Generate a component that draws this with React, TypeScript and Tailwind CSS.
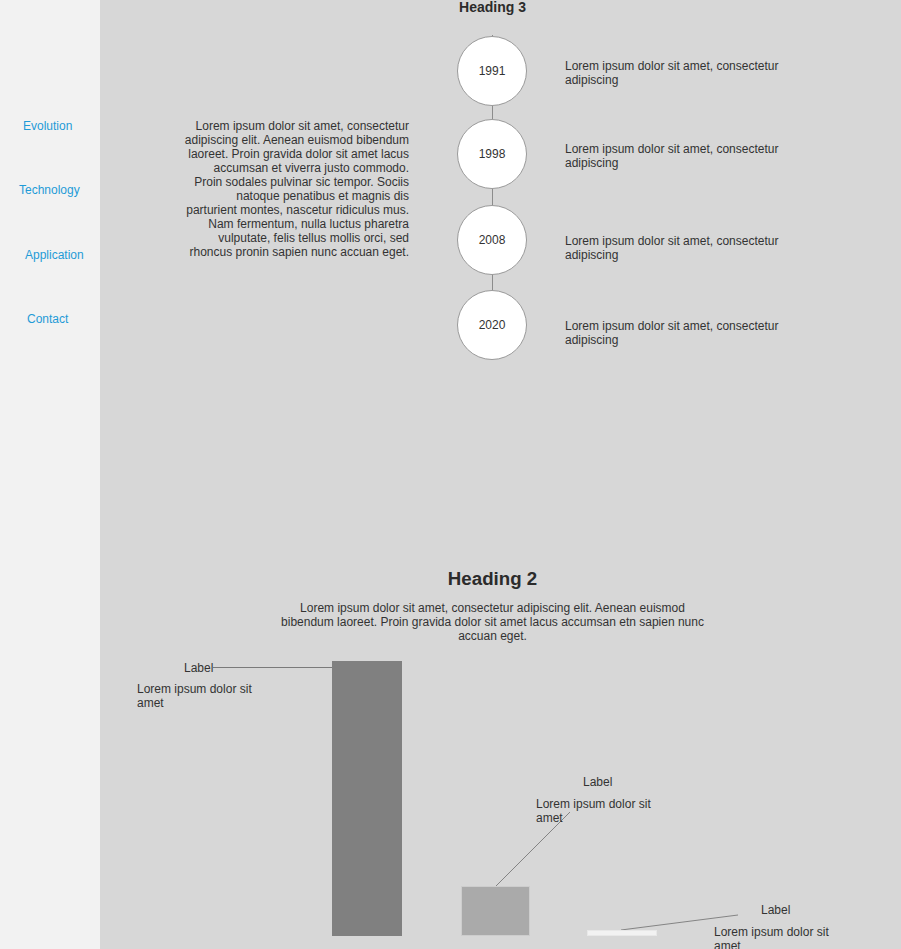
import React from 'react';

const navItems = [
  { label: 'Evolution', cls: 'pl-[23px] mt-[119px]' },
  { label: 'Technology', cls: 'pl-[19px] mt-[50px]' },
  { label: 'Application', cls: 'pl-[25px] mt-[51px]' },
  { label: 'Contact', cls: 'pl-[27px] mt-[50px]' },
];

const milestones = [
  { year: '1991', gap: 'h-px', pad: 'pt-[4px]' },
  { year: '1998', gap: 'h-[13px]', pad: 'pt-[4px]' },
  { year: '2008', gap: 'h-[16px]', pad: 'pt-[16px]' },
  { year: '2020', gap: 'h-[15px]', pad: 'pt-[16px]' },
];

const blurb = 'Lorem ipsum dolor sit amet, consectetur adipiscing';
const intro =
  'Lorem ipsum dolor sit amet, consectetur adipiscing elit. Aenean euismod bibendum laoreet. Proin gravida dolor sit amet lacus accumsan et viverra justo commodo. Proin sodales pulvinar sic tempor. Sociis natoque penatibus et magnis dis parturient montes, nascetur ridiculus mus. Nam fermentum, nulla luctus pharetra vulputate, felis tellus mollis orci, sed rhoncus pronin sapien nunc accuan eget.';

function Sidebar() {
  return (
    <nav className="w-[100px] shrink-0 bg-[#f2f2f2] flex flex-col">
      {navItems.map((item) => (
        <a key={item.label} href="#" className={`${item.cls} text-[12px] leading-[14px] text-[#1f9bd7]`}>
          {item.label}
        </a>
      ))}
    </nav>
  );
}

function Timeline() {
  return (
    <section className="flex mt-[20px]">
      <p className="ml-[83px] mt-[84px] w-[226px] text-right text-[12px] leading-[14px] text-[#333]">{intro}</p>
      <div className="ml-[48px] flex flex-col">
        {milestones.map((m) => (
          <div key={m.year} className="flex flex-col">
            <div className="w-[70px] flex justify-center">
              <div className={`w-px ${m.gap} bg-[#8c8c8c]`} />
            </div>
            <div className="flex items-center">
              <div className="w-[70px] h-[70px] rounded-full bg-white border border-[#9a9a9a] flex items-center justify-center text-[12px] text-[#333]">
                {m.year}
              </div>
              <p className={`ml-[38px] ${m.pad} w-[230px] text-[12px] leading-[14px] text-[#333]`}>{blurb}</p>
            </div>
          </div>
        ))}
      </div>
    </section>
  );
}

function Chart() {
  return (
    <div className="relative h-[299px] text-[12px] leading-[14px] text-[#333]">
      <svg className="absolute inset-0" width="801" height="299">
        <line x1="113" y1="17.5" x2="232" y2="17.5" stroke="#7a7a7a" strokeWidth="1" />
        <line x1="470" y1="162" x2="396" y2="236" stroke="#6f6f6f" strokeWidth="0.8" />
        <line x1="638" y1="265" x2="521" y2="280" stroke="#6f6f6f" strokeWidth="0.8" />
      </svg>
      <div className="absolute left-[232px] top-[11px] w-[70px] h-[275px] bg-[#808080]" />
      <div className="absolute left-[361px] top-[236px] w-[69px] h-[50px] bg-[#aaaaaa] border border-[#cdcdcd]" />
      <div className="absolute left-[487px] top-[280px] w-[70px] h-[6px] bg-[#f2f2f2] border border-[#e8e8e8]" />

      <span className="absolute left-[84px] top-[11px]">Label</span>
      <p className="absolute left-[37px] top-[32px] w-[125px]">Lorem ipsum dolor sit amet</p>

      <span className="absolute left-[483px] top-[125px]">Label</span>
      <p className="absolute left-[436px] top-[147px] w-[125px]">Lorem ipsum dolor sit amet</p>

      <span className="absolute left-[661px] top-[253px]">Label</span>
      <p className="absolute left-[614px] top-[275px] w-[125px]">Lorem ipsum dolor sit amet</p>
    </div>
  );
}

export default function App() {
  return (
    <div
      className="flex h-[949px] w-[901px] overflow-hidden"
      style={{ fontFamily: '"Liberation Sans", Arial, sans-serif' }}
    >
      <Sidebar />
      <main className="flex-1 bg-[#d7d7d7] text-[#333]">
        <div className="w-[785px]">
          <h3 className="-mt-[1px] text-center text-[14px] leading-[16px] font-bold text-[#2b2b2b]">Heading 3</h3>
          <Timeline />
          <h2 className="mt-[208px] text-center text-[18.7px] leading-[22px] font-bold text-[#2b2b2b]">Heading 2</h2>
          <p className="mt-[11px] mx-auto w-[430px] text-center text-[12px] leading-[14px]">
            Lorem ipsum dolor sit amet, consectetur adipiscing elit. Aenean euismod bibendum laoreet. Proin gravida dolor sit amet lacus accumsan etn sapien nunc accuan eget.
          </p>
        </div>
        <div className="mt-[7px]">
          <Chart />
        </div>
      </main>
    </div>
  );
}
